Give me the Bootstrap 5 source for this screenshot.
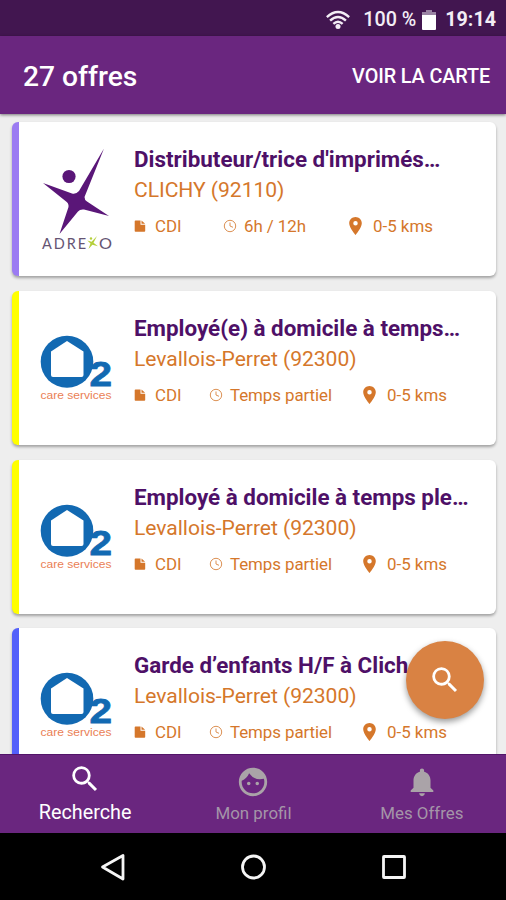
<!DOCTYPE html>
<html lang="fr">
<head>
<meta charset="utf-8">
<meta name="viewport" content="width=device-width, initial-scale=1">
<title>27 offres</title>
<link href="https://cdn.jsdelivr.net/npm/bootstrap@5.3.0/dist/css/bootstrap.min.css" rel="stylesheet">
<style>
body{font-family:Roboto,"Liberation Sans",sans-serif;height:900px;background:#eee;line-height:1.2}
svg{display:block;flex:none}
.status{height:36px;background:#421650;font-size:19.7px;font-weight:500;color:#f3edf5;padding:3px 10px 0 0}
.status .cell{margin:0 9px 0 6px}
.appbar{height:78px;background:#6a267f;padding:3px 16px 0 23px;box-shadow:0 1px 3px rgba(0,0,0,.5);z-index:2}
.appbar h1{font-size:28.2px;font-weight:500}
.appbar a{font-size:19.8px;font-weight:500;letter-spacing:-.1px}
.offers{padding:8px 10px 0 12px;min-height:0}
.offer{height:154px;margin-bottom:14.8px;border:0;border-left:7px solid #9b7bf2;border-radius:6px;box-shadow:0 2px 3px rgba(0,0,0,.32);flex:none}
.offer.yellow{border-left-color:#ff0}
.offer.blue{border-left-color:#5360fa}
.logo-box{width:115px;height:154px}
.logo-box.house{padding-left:21px}
.offer h2{font-size:22.4px;font-weight:700;color:#4e1067;line-height:30px;padding-top:22px}
.town{font-size:21.1px;line-height:30px;color:#d5772b;padding-top:1px;letter-spacing:-.05px}
.facts{font-size:16.9px;line-height:24px;color:#d5772b;margin-top:9px}
.facts svg{margin-right:9px}
.facts .hours svg{margin-right:7px}
.facts .dist svg{margin-right:11px}
.kind{width:75px}
.hours{width:154px;letter-spacing:-.07px}
.short .kind{width:89px}
.short .hours{width:126px}
.fab{position:absolute;right:22px;bottom:35px;width:78px;height:78px;background:#d98243;box-shadow:0 3px 6px rgba(0,0,0,.4);border:0;z-index:3}
.tabs{height:79px;background:#6a267f;border-top:1px solid #521469;z-index:2;padding-left:1px}
.tabs a{color:#a495a8;font-size:16.9px;line-height:24px;padding-top:10px}
.tabs a svg{color:#aaa3a8;margin-bottom:2px}
.tabs a.active{color:#fff;font-size:19.8px;padding-top:7px}
.tabs a.active svg{color:#fff;margin-bottom:5px}
.keys{height:67px;background:#000}
</style>
<script src="https://cdn.jsdelivr.net/npm/bootstrap@5.3.0/dist/js/bootstrap.bundle.min.js"></script>
</head>
<body class="d-flex flex-column overflow-hidden m-0">
<svg width="0" height="0" class="position-absolute" aria-hidden="true">
  <symbol id="search" viewBox="0 0 24 24"><path fill="currentColor" d="M15.5 14h-.79l-.28-.27A6.47 6.47 0 0 0 16 9.5 6.5 6.5 0 1 0 9.5 16c1.61 0 3.09-.59 4.23-1.57l.27.28v.79l5 4.99L20.49 19l-4.99-5zm-6 0C7.01 14 5 11.99 5 9.5S7.01 5 9.5 5 14 7.01 14 9.5 11.99 14 9.5 14z"/></symbol>
  <symbol id="doc" viewBox="0 0 11 12"><path fill="currentColor" d="M1 .5h5v4.200h4.700V11a.8.8 0 0 1-.8.8H1a.8.8 0 0 1-.8-.8V1.300A.8.8 0 0 1 1 .5zM7 .6l3.600 3.200H7z"/></symbol>
  <symbol id="clock" viewBox="0 0 14 14"><g fill="none" stroke="currentColor" stroke-width="1" opacity=".8"><circle cx="7" cy="7" r="5.700"/><path d="M7 3.500V7l3 1.300"/></g></symbol>
  <symbol id="pin" viewBox="5 2 14 20"><path fill="currentColor" d="M12 2C8.130 2 5 5.130 5 9c0 5.250 7 13 7 13s7-7.750 7-13c0-3.870-3.130-7-7-7zm0 9.500a2.500 2.500 0 1 1 0-5 2.500 2.500 0 0 1 0 5z"/></symbol>
  <symbol id="house" viewBox="0 0 76 68">
    <ellipse cx="27" cy="27.800" rx="26.300" ry="26" fill="#1269b2"/>
    <path fill="#fff" d="M11 17.500 27 7l16.500 10.500v23.500q0 2-2 2H13q-2 0-2-2z"/>
  </symbol>
</svg>

<div class="status d-flex align-items-center justify-content-end flex-shrink-0">
  <svg width="26" height="21" viewBox="0 0 28 22" fill="none" stroke="#f3edf5" stroke-width="2.600"><path d="M2 8.500q12-11 24 0M5.500 12.300q8.500-8 17 0M9 15.800q5-4.600 10 0"/><circle cx="14" cy="18.500" r="2.700" fill="#f3edf5" stroke="none"/></svg>
  <span class="ms-2 ps-1">100 %</span>
  <svg class="cell" width="14" height="20" viewBox="0 0 14 20"><path fill="#9a83a3" d="M4 0h6v2h4v4H0V2h4z"/><path fill="#fff" d="M0 5h14v14q0 1-1 1H1q-1 0-1-1z"/></svg>
  <span class="fw-bold">19:14</span>
</div>

<header class="appbar d-flex align-items-center justify-content-between text-white flex-shrink-0 position-relative">
  <h1 class="m-0">27 offres</h1>
  <a href="#" class="text-white text-decoration-none">VOIR LA CARTE</a>
</header>

<main class="offers d-flex flex-column flex-grow-1 overflow-hidden position-relative">
  <article class="offer card flex-row short">
    <div class="logo-box flex-shrink-0">
      <svg width="115" height="154" viewBox="19 122 115 154">
        <path fill="#5a1678" d="M104 148.500 84.500 197q0 3 2.500 4.500l22 14.500-25-6.500q-4-.5-6 2L59.500 234l9-27q.5-4-3-6L43 183l29 10.500q4 1 7-2.500z"/>
        <circle cx="69" cy="176.500" r="6.600" fill="#5a1678"/>
        <g font-family="Lato,sans-serif" font-size="14.500" fill="#655473"><text x="42" y="248.500" textLength="44" lengthAdjust="spacing">ADRE</text><text x="99" y="248.500" textLength="13" lengthAdjust="spacingAndGlyphs">O</text></g>
        <path fill="#b5cf3b" d="m97 236-3.500 6.800 4.500 3.500-5.600-1.500-3.900 4.200 2-5.600-3.200-2.900 4.300 1.200z"/><circle cx="91" cy="238.500" r="1.200" fill="#b5cf3b"/>
      </svg>
    </div>
    <div>
      <h2 class="m-0 text-nowrap">Distributeur/trice d'imprimés…</h2>
      <div class="town">CLICHY (92110)</div>
      <div class="facts d-flex">
        <div class="kind d-flex align-items-center"><svg width="12" height="12"><use href="#doc"/></svg>CDI</div>
        <div class="hours d-flex align-items-center"><svg width="14" height="14"><use href="#clock"/></svg>6h / 12h</div>
        <div class="dist d-flex align-items-center"><svg width="13" height="18"><use href="#pin"/></svg>0-5 kms</div>
      </div>
    </div>
  </article>

  <article class="offer card flex-row yellow">
    <div class="logo-box house flex-shrink-0 d-flex align-items-center">
      <svg width="76" height="68" viewBox="0 0 76 68" font-family="Liberation Sans,sans-serif"><use href="#house" width="76" height="68"/><text x="49.500" y="51.500" font-weight="700" font-size="35" textLength="22.500" lengthAdjust="spacingAndGlyphs" fill="#1269b2" stroke="#1269b2" stroke-width=".8">2</text><text x=".5" y="64.500" font-size="11" textLength="71" lengthAdjust="spacingAndGlyphs" fill="#ea8055">care services</text></svg>
    </div>
    <div>
      <h2 class="m-0 text-nowrap">Employé(e) à domicile à temps…</h2>
      <div class="town">Levallois-Perret (92300)</div>
      <div class="facts d-flex">
        <div class="kind d-flex align-items-center"><svg width="12" height="12"><use href="#doc"/></svg>CDI</div>
        <div class="hours d-flex align-items-center"><svg width="14" height="14"><use href="#clock"/></svg>Temps partiel</div>
        <div class="dist d-flex align-items-center"><svg width="13" height="18"><use href="#pin"/></svg>0-5 kms</div>
      </div>
    </div>
  </article>

  <article class="offer card flex-row yellow">
    <div class="logo-box house flex-shrink-0 d-flex align-items-center">
      <svg width="76" height="68" viewBox="0 0 76 68" font-family="Liberation Sans,sans-serif"><use href="#house" width="76" height="68"/><text x="49.500" y="51.500" font-weight="700" font-size="35" textLength="22.500" lengthAdjust="spacingAndGlyphs" fill="#1269b2" stroke="#1269b2" stroke-width=".8">2</text><text x=".5" y="64.500" font-size="11" textLength="71" lengthAdjust="spacingAndGlyphs" fill="#ea8055">care services</text></svg>
    </div>
    <div>
      <h2 class="m-0 text-nowrap">Employé à domicile à temps ple…</h2>
      <div class="town">Levallois-Perret (92300)</div>
      <div class="facts d-flex">
        <div class="kind d-flex align-items-center"><svg width="12" height="12"><use href="#doc"/></svg>CDI</div>
        <div class="hours d-flex align-items-center"><svg width="14" height="14"><use href="#clock"/></svg>Temps partiel</div>
        <div class="dist d-flex align-items-center"><svg width="13" height="18"><use href="#pin"/></svg>0-5 kms</div>
      </div>
    </div>
  </article>

  <article class="offer card flex-row blue">
    <div class="logo-box house flex-shrink-0 d-flex align-items-center">
      <svg width="76" height="68" viewBox="0 0 76 68" font-family="Liberation Sans,sans-serif"><use href="#house" width="76" height="68"/><text x="49.500" y="51.500" font-weight="700" font-size="35" textLength="22.500" lengthAdjust="spacingAndGlyphs" fill="#1269b2" stroke="#1269b2" stroke-width=".8">2</text><text x=".5" y="64.500" font-size="11" textLength="71" lengthAdjust="spacingAndGlyphs" fill="#ea8055">care services</text></svg>
    </div>
    <div>
      <h2 class="m-0 text-nowrap">Garde d’enfants H/F à Clich</h2>
      <div class="town">Levallois-Perret (92300)</div>
      <div class="facts d-flex">
        <div class="kind d-flex align-items-center"><svg width="12" height="12"><use href="#doc"/></svg>CDI</div>
        <div class="hours d-flex align-items-center"><svg width="14" height="14"><use href="#clock"/></svg>Temps partiel</div>
        <div class="dist d-flex align-items-center"><svg width="13" height="18"><use href="#pin"/></svg>0-5 kms</div>
      </div>
    </div>
  </article>

  <button class="fab btn rounded-circle d-flex align-items-center justify-content-center p-0 text-white" aria-label="Rechercher"><svg width="34" height="34"><use href="#search"/></svg></button>
</main>

<nav class="tabs d-flex flex-shrink-0 text-center">
  <a href="#" class="active col-4 d-flex flex-column align-items-center text-decoration-none"><svg width="34" height="34"><use href="#search"/></svg><span>Recherche</span></a>
  <a href="#" class="col-4 d-flex flex-column align-items-center text-decoration-none"><svg width="34" height="34" viewBox="0 0 24 24" fill="currentColor"><path d="M9 11.750a1.250 1.250 0 1 0 0 2.500 1.250 1.250 0 0 0 0-2.500zm6 0a1.250 1.250 0 1 0 0 2.500 1.250 1.250 0 0 0 0-2.500zM12 2C6.480 2 2 6.480 2 12s4.480 10 10 10 10-4.480 10-10S17.520 2 12 2zm0 18c-4.410 0-8-3.590-8-8 0-.290.020-.580.050-.860 2.360-1.050 4.230-2.980 5.210-5.370a9.974 9.974 0 0 0 10.410 3.970c.210.710.330 1.470.330 2.260 0 4.410-3.590 8-8 8z"/></svg><span>Mon profil</span></a>
  <a href="#" class="col-4 d-flex flex-column align-items-center text-decoration-none"><svg width="34" height="34" viewBox="0 0 24 24" fill="currentColor"><path d="M12 22c1.100 0 2-.900 2-2h-4c0 1.100.890 2 2 2zm6-6v-5c0-3.070-1.640-5.640-4.500-6.320V4c0-.830-.670-1.500-1.500-1.500s-1.500.670-1.500 1.500v.680C7.630 5.360 6 7.920 6 11v5l-2 2v1h16v-1l-2-2z"/></svg><span>Mes Offres</span></a>
</nav>

<div class="keys d-flex justify-content-center align-items-center flex-shrink-0">
  <svg width="310" height="30" viewBox="98.500 852 310 30" fill="none" stroke="#f5f5f5" stroke-width="2.800" stroke-linejoin="round"><path d="M123.500 855.500v23.500l-20.500-12z"/><circle cx="254" cy="867" r="11"/><rect x="384" y="856.500" width="21" height="21" rx=".5"/></svg>
</div>
</body>
</html>
